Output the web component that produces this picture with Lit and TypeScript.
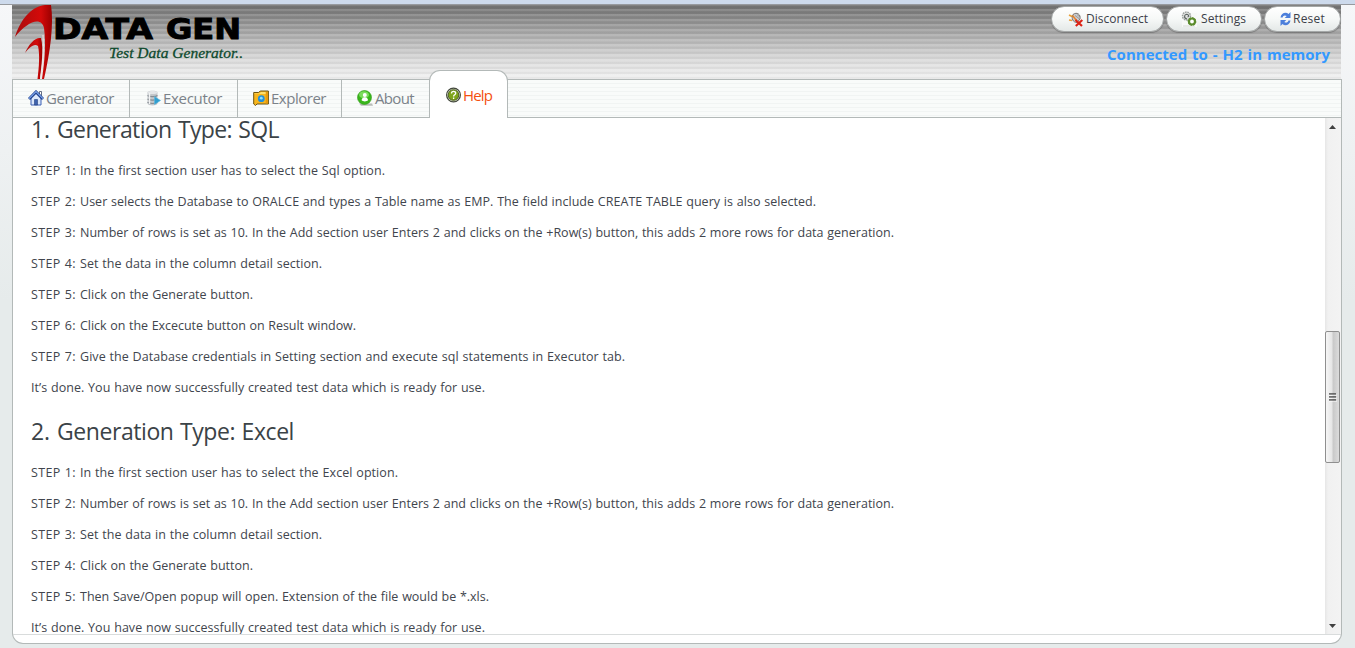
import { LitElement, html, css, svg } from "lit";
import { customElement, property, state } from "lit/decorators.js";

/** A single line of text tracked so that it fills a given width. */
@customElement("fit-text")
class FitText extends LitElement {
  @property({ type: String }) text = "";
  @property({ type: Number }) size = 100;
  @state() private tracking = 0;

  static styles = css`
    :host { display: inline-block; white-space: pre; }
    .line { display: inline-block; }
  `;

  firstUpdated() {
    const span = this.renderRoot.querySelector(".line") as HTMLElement;
    const natural = span.getBoundingClientRect().width;
    this.tracking = (this.size - natural) / Math.max(1, this.text.length);
  }

  render() {
    return html`<span class="line" style="letter-spacing:${this.tracking}px">${this.text}</span>`;
  }
}

const icons = {
  house: svg`
    <path d="M3 8v7h10V8L8 3z" fill="#dbe7fb" stroke="#3c61b5"/>
    <path d="M11.500 1.500h2v4h-2z" fill="#fff" stroke="#3d4a66" stroke-width=".8"/>
    <path d="M1 9l7-7 7 7" fill="none" stroke="#1f3f8c" stroke-width="3"/>
    <path d="M1 8.700l7-7 7 7" fill="none" stroke="#7ea6ec" stroke-width="1.200"/>
    <path d="M6.500 9.500h3V15h-3z" fill="#3f63ae" stroke="#24407f" stroke-width=".6"/>`,
  server: svg`
    <path d="M1.500 2.500c0-2.500 10-2.500 10 0v11c0 2.500-10 2.500-10 0z" fill="#c3c7cb"/>
    <path d="M1.500 2.500c0-2 10-2 10 0s-10 2-10 0" fill="#e4e6e8"/>
    <path d="M1.500 5.500c2 1.500 8 1.500 10 0M1.500 9c2 1.500 8 1.500 10 0M1.500 12.300c2 1.500 8 1.500 10 0" fill="none" stroke="#858b92" stroke-width="1.100"/>
    <path d="M3.500 3v11" stroke="#f1f2f3" stroke-width="1.400"/>
    <path d="M8.500 6.500l6 4-6 4z" fill="#2f9fd0" stroke="#5fb9df" stroke-width=".6"/>`,
  folder: svg`
    <path d="M.7 2.500h5l1.500-1.500h8.200V14H4l-1.500 1.500L.7 14z" fill="#f7b51c" stroke="#6d5412"/>
    <path d="M1.500 3.500h5L8 2h6.500v2H1.500z" fill="#ffdf6b"/>
    <path d="M12.700 2h2.200v11.500h-2.200z" fill="#e99a0b"/>
    <circle cx="8.300" cy="8.700" r="3.400" fill="#2390dc"/>
    <circle cx="8.300" cy="8.200" r="1.400" fill="#8fe0fb"/>`,
  person: svg`
    <path d="M2 13.500h13l1 2.200H4z" fill="#b9bdb9"/>
    <circle cx="7.500" cy="7.500" r="7" fill="#39b51b" stroke="#2f9c16" stroke-width=".6"/>
    <ellipse cx="7" cy="4.800" rx="5" ry="3.600" fill="#7bdc5c"/>
    <circle cx="7.800" cy="5" r="2" fill="#fff"/>
    <path d="M4.600 10.300c0-4 6.400-4 6.400 0-1.500 1.500-4.900 1.500-6.400 0z" fill="#fff"/>`,
  help: svg`
    <circle cx="7.500" cy="8" r="6.900" fill="#d9ddcf" stroke="#42473b" stroke-width="1.200"/>
    <circle cx="7.500" cy="8" r="5.300" fill="#7fa51b" stroke="#4a5c1d" stroke-width=".9"/>
    <path d="M5.500 6.500c0-2.800 4.200-2.600 4.200-.3 0 1.500-2.100 1.500-2.100 3.200M7.600 10.500V12" fill="none" stroke="#fff" stroke-width="1.300"/>`,
  plug: svg`
    <path d="M1 4l4 2M1 9l3 .5" stroke="#e9a03a" stroke-width="1.700"/>
    <path d="M5 3.500c4-3 8 0 7 4.500L9 11.500c-4 0-6-4-4-8z" fill="#c9cdd0" stroke="#6f6a68" stroke-width=".9"/>
    <path d="M4.500 4.500l4 5" stroke="#e8832b" stroke-width="1.500"/>
    <path d="M7 4.500l4 3M9 3.500l3 2.500" stroke="#918c8b" stroke-width=".8"/>
    <path d="M7.500 9l6.500 6M14.300 9l-6.500 6" stroke="#dc2315" stroke-width="2.200"/>`,
  gears: svg`
    <path d="M1 2h15v14H1z" fill="#f8f9f8"/>
    <path d="M2 15h12" stroke="#d5d8d6"/>
    <circle cx="5.500" cy="5" r="4" fill="#dfe1df" stroke="#9a9f9c" stroke-width="1.400" stroke-dasharray="1.600 .8"/>
    <path d="M6 8C2 7 3.500 2.500 6.500 3.500c2 .8 1 2.500 0 2.200" fill="none" stroke="#5e6563" stroke-width="1.100"/>
    <circle cx="11" cy="10.500" r="3" fill="#fff" stroke="#5b8c2c" stroke-width="2.200"/>
    <circle cx="11" cy="10.500" r="3.900" fill="none" stroke="#5b8c2c" stroke-width="1" stroke-dasharray="1.500 1.500"/>`,
  reload: svg`
    <path d="M1.500 6.500C2 2 7 .5 9.500 3L11.500 1v6H5.700L7.700 5C6 3.900 4 4.400 3.600 6.500z" fill="#4c7fdb"/>
    <path d="M11.500 9.500c-.5 4.500-5.500 6-8 3.500L1.500 15V9h5.800L5.300 11c1.700 1.100 3.700.6 4.100-1.500z" fill="#4c7fdb"/>`,
};

type Section = { no: string; title: string; w: number; steps: [string, number][] };

const rowsText =
  "Number of rows is set as 10. In the Add section user Enters 2 and clicks on the +Row(s) button, this adds 2 more rows for data generation.";
const doneText = "It’s done. You have now successfully created test data which is ready for use.";

const sections: Section[] = [
  {
    no: "1. ",
    title: "Generation Type: SQL",
    w: 248,
    steps: [
      ["STEP 1: In the first section user has to select the Sql option.", 354],
      ["STEP 2: User selects the Database to ORALCE and types a Table name as EMP. The field include CREATE TABLE query is also selected.", 785],
      ["STEP 3: " + rowsText, 863],
      ["STEP 4: Set the data in the column detail section.", 291],
      ["STEP 5: Click on the Generate button.", 222],
      ["STEP 6: Click on the Excecute button on Result window.", 325],
      ["STEP 7: Give the Database credentials in Setting section and execute sql statements in Executor tab.", 594],
      [doneText, 454],
    ],
  },
  {
    no: "2. ",
    title: "Generation Type: Excel",
    w: 263,
    steps: [
      ["STEP 1: In the first section user has to select the Excel option.", 367],
      ["STEP 2: " + rowsText, 863],
      ["STEP 3: Set the data in the column detail section.", 291],
      ["STEP 4: Click on the Generate button.", 222],
      ["STEP 5: Then Save/Open popup will open. Extension of the file would be *.xls.", 458],
      [doneText, 454],
    ],
  },
];

const numberWidth = 26;
const labelWidth = 49;
const labelLength = "STEP 1: ".length;

@customElement("app-root")
class AppRoot extends LitElement {
  static styles = css`
    :host {
      display: flex; flex-direction: column; box-sizing: border-box;
      width: 100%; height: 648px; overflow: hidden;
      font-family: "Open Sans", "Noto Sans", sans-serif;
      background: linear-gradient(#f6f7f9, #e6ebeb 300px);
    }
    * { box-sizing: border-box; }
    svg { display: block; flex: none; }
    .strip { flex: none; height: 5px; background: #cddaec; border-bottom: 1px solid #979a9f; }
    .page { flex: none; width: 1330px; margin-left: 12px; }
    .header {
      height: 74px; display: flex; justify-content: space-between;
      background:
        repeating-linear-gradient(rgba(255,255,255,.12) 0 1px, rgba(255,255,255,0) 1px 2px, rgba(0,0,0,.04) 2px 4px, rgba(255,255,255,.14) 4px 5px),
        linear-gradient(#707070, #8f8f8f 16px, #b4b4b4 34px, #dadada 54px, #f2f2f2 74px);
      width: 1329px;
    }
    .side { display: flex; flex-direction: column; align-items: flex-end; }
    .buttons { display: flex; gap: 2px; padding-top: 1px; }
    .btn {
      height: 26px; display: flex; align-items: center; border-radius: 13px;
      border: 1px solid #a5a8a8; background: linear-gradient(#fff, #f6f8f7 50%, #e4e8e7);
      box-shadow: 0 1px 1px rgba(0,0,0,.25);
      font-size: 12px; color: #3c4048; line-height: 16px;
    }
    .disconnect { width: 113px; padding-left: 16px; gap: 2px; }
    .settings { width: 96px; padding-left: 14px; gap: 4px; }
    .reset { width: 77px; padding-left: 14px; gap: 1px; }
    .status { margin: 12px 11px 0 0; font-weight: 700; font-size: 15px; line-height: 20px; color: #3399ff; word-spacing: 1px; }
    .tabs {
      height: 39px; display: flex; border: 1px solid #b3b9b8;
      background: repeating-linear-gradient(#f9fbfa 0 3px, #f1f4f3 3px 4px);
    }
    .tab {
      height: 37px; display: flex; align-items: center; border-right: 1px solid #b3b9b8;
      font-size: 15px; line-height: 20px; color: #7b8289; gap: 2px;
    }
    .tab svg { margin-top: -2px; }
    .tab fit-text { margin-top: -1px; }
    .generator { width: 117px; padding-left: 15px; }
    .executor { width: 108px; padding-left: 16px; gap: 1px; }
    .explorer { width: 104px; padding-left: 15px; }
    .about { width: 87px; padding-left: 15px; border-right: 0; }
    .current {
      width: 79px; height: 48px; margin-top: -10px; padding: 0 0 0 16px; gap: 2px;
      border: 1px solid #b3b9b8; border-bottom: 0; border-radius: 11px 11px 0 0;
      background: #fff; color: #f4500f;
    }
    .current svg { margin-top: 0; }
    .current fit-text { margin-top: 1px; }
    .panel {
      height: 526px; border: 1px solid #b3b9b8; border-top: 0;
      border-radius: 0 0 11px 11px; background: #fff;
    }
    .view { height: 517px; display: flex; border-bottom: 1px solid #d9dcdc; overflow: hidden; }
    .doc { flex: 1; min-width: 0; height: 516px; overflow: hidden; padding-left: 18px; }
    section { display: flow-root; }
    section:first-child { margin-top: -23px; }
    h2 {
      margin: 0; padding: 20px 0 19px; height: 67px; display: flex;
      font-weight: 400; font-size: 23px; line-height: 28px; color: #3b4347; word-spacing: 1px;
    }
    p {
      margin: 0 0 13px; display: flex; height: 18px;
      font-size: 12.5px; line-height: 18px; color: #41454d; word-spacing: .5px;
    }
    section p:last-child { margin-bottom: 0; }
    .bar {
      width: 16px; height: 516px; display: flex; flex-direction: column; flex: none;
      align-items: flex-start; background: linear-gradient(90deg, #e6e6e6, #f1f1f1 3px, #f3f3f3);
    }
    .bar > svg { margin-left: 4px; }
    .above { flex: none; height: 195px; }
    .below { flex: none; height: 153px; }
    .thumb {
      flex: none; width: 15px; height: 132px; border: 1px solid #8f8f8f; border-radius: 2px;
      background: linear-gradient(90deg, #f6f6f6, #e6e6e6 45%, #c9c9c9 55%, #dcdcdc);
      display: flex; align-items: center; justify-content: center;
    }
  `;

  private icon(name: keyof typeof icons, w = 16) {
    return html`<svg width=${w} height="16" viewBox="0 0 ${w} 16">${icons[name]}</svg>`;
  }

  private arrow(d: string) {
    return html`<svg width="7" height="18" viewBox="0 0 7 18"><path d=${d} fill="#404040" /></svg>`;
  }

  private step([text, width]: [string, number]) {
    if (!text.startsWith("STEP")) {
      return html`<p><fit-text .text=${text} .size=${width}></fit-text></p>`;
    }
    return html`<p><fit-text .text=${text.slice(0, labelLength)} .size=${labelWidth}></fit-text><fit-text
      .text=${text.slice(labelLength)} .size=${width - labelWidth}></fit-text></p>`;
  }

  render() {
    return html`
      <div class="strip"></div>
      <div class="page">
        <div class="header">
          <svg width="240" height="74" viewBox="0 0 240 74">
            <defs>
              <linearGradient id="red" x1="0" x2="1">
                <stop offset="0" stop-color="#a90d0d" />
                <stop offset=".7" stop-color="#d40a0a" />
                <stop offset="1" stop-color="#9a0000" />
              </linearGradient>
            </defs>
            <path d="M3 32C8 16 18 2 33 0h6C42 20 38 48 32 74h-2C33 54 34 38 32 23 29 11 15 17 3 32z" fill="url(#red)" />
            <path d="M13 48C17 39 23 32 29 33 32 45 29 62 28 74h-2.500C27 62 28 50 26 41 22 38 17 43 13 48z" fill="url(#red)" />
            <path d="M31 30c1 16 0 30-2.500 44" fill="none" stroke="#f5e9e9" stroke-width="1" />
            <g font-family="DejaVu Sans" font-weight="700" font-size="29" stroke="#000" stroke-width="1">
              <text x="41" y="34" textLength="100" lengthAdjust="spacingAndGlyphs">DATA</text>
              <text x="154" y="34" textLength="75" lengthAdjust="spacingAndGlyphs">GEN</text>
            </g>
            <text x="97" y="53" textLength="134" font-family="Liberation Serif" font-style="italic"
              font-size="15.500" fill="#0d4a2d" stroke="#0d4a2d" stroke-width=".3">Test Data Generator..</text>
          </svg>
          <div class="side">
            <div class="buttons">
              <div class="btn disconnect">${this.icon("plug")}<fit-text text="Disconnect" size="62"></fit-text></div>
              <div class="btn settings">${this.icon("gears")}<fit-text text="Settings" size="45"></fit-text></div>
              <div class="btn reset">${this.icon("reload", 13)}<fit-text text="Reset" size="32"></fit-text></div>
            </div>
            <fit-text class="status" text="Connected to - H2 in memory" size="223"></fit-text>
          </div>
        </div>
        <div class="tabs">
          <div class="tab generator">${this.icon("house")}<fit-text text="Generator" size="68"></fit-text></div>
          <div class="tab executor">${this.icon("server")}<fit-text text="Executor" size="59"></fit-text></div>
          <div class="tab explorer">${this.icon("folder")}<fit-text text="Explorer" size="55"></fit-text></div>
          <div class="tab about">${this.icon("person")}<fit-text text="About" size="39"></fit-text></div>
          <div class="tab current">${this.icon("help", 15)}<fit-text text="Help" size="29"></fit-text></div>
        </div>
        <div class="panel">
          <div class="view">
            <div class="doc">
              ${sections.map(
                (s) => html`<section>
                  <h2><fit-text .text=${s.no} .size=${numberWidth}></fit-text><fit-text
                    .text=${s.title} .size=${s.w - numberWidth}></fit-text></h2>
                  ${s.steps.map((step) => this.step(step))}
                </section>`
              )}
            </div>
            <div class="bar">
              ${this.arrow("M0 11L3.500 7 7 11z")}
              <div class="above"></div>
              <div class="thumb">
                <svg width="8" height="9" viewBox="0 0 8 9">
                  <path d="M0 1h7M0 4h7M0 7h7" stroke="#4a4a4a" stroke-width="1.300" />
                  <path d="M0 2.200h8M0 5.200h8M0 8.200h8" stroke="#fff" stroke-width=".7" />
                </svg>
              </div>
              <div class="below"></div>
              ${this.arrow("M0 8L3.500 12 7 8z")}
            </div>
          </div>
        </div>
      </div>
    `;
  }
}
